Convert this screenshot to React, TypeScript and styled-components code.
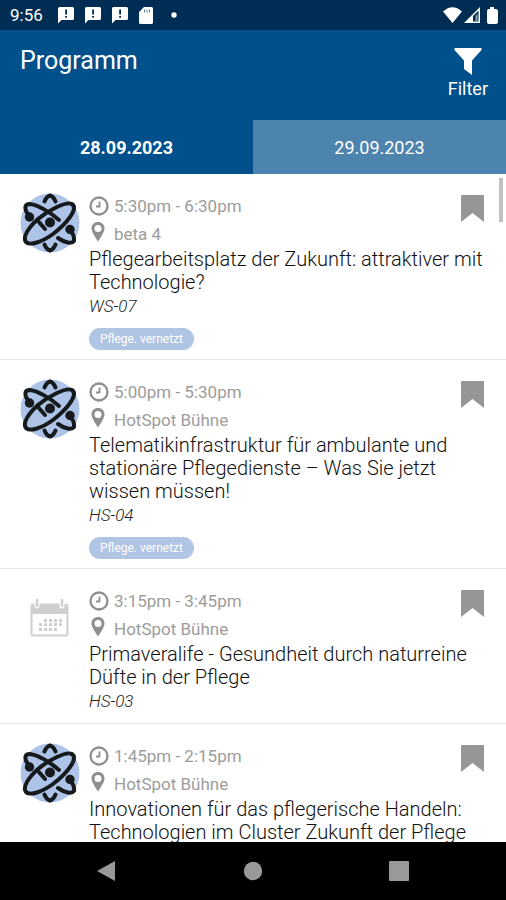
import React, { useState } from "react";
import styled, { createGlobalStyle } from "styled-components";

const GlobalStyle = createGlobalStyle`
  *, *::before, *::after { box-sizing: border-box; }
  body { margin: 0; background: #fff; font-family: Roboto, "Noto Sans", sans-serif; }
  button { font-family: inherit; }
  h1, h2, p, ul { margin: 0; padding: 0; }
`;

const Screen = styled.div`
  display: flex;
  flex-direction: column;
  height: 100vh;
`;

const StatusBar = styled.div`
  display: flex;
  flex: none;
  align-items: center;
  height: 30px;
  padding: 0 6px 0 10px;
  background: #002d54;
  color: #fff;
`;

const Clock = styled.time`
  width: 48px;
  font-size: 17px;
  line-height: 30px;
`;

const StatusIcons = styled.div`
  display: flex;
  flex: 1;
  align-items: center;
  gap: 11px;
`;

const SignalIcons = styled.div`
  display: flex;
  align-items: center;
  gap: 2px;
`;

const Header = styled.header`
  display: flex;
  flex: none;
  justify-content: space-between;
  align-items: flex-start;
  height: 90px;
  padding: 15px 18px 0 20px;
  background: #00508c;
  color: #fff;
`;

const PageTitle = styled.h1`
  font-size: 25px;
  font-weight: 400;
  line-height: 32px;
`;

const FilterButton = styled.button`
  display: flex;
  flex-direction: column;
  align-items: center;
  gap: 2px;
  padding: 2px 0 0;
  border: 0;
  background: none;
  color: inherit;
  font-size: 18px;
  line-height: 24px;
`;

const Tabs = styled.div`
  display: grid;
  flex: none;
  grid-template-columns: 1fr 1fr;
  height: 54px;
  background: #00508c;
`;

const Tab = styled.button<{ $active: boolean }>`
  padding: 1px 0 0;
  border: 0;
  background: ${(p) => (p.$active ? "#00508c" : "#4d84ae")};
  color: #fff;
  font-size: 18px;
  font-weight: ${(p) => (p.$active ? 700 : 400)};
`;

const ListArea = styled.main`
  position: relative;
  flex: 1;
  min-height: 0;
  overflow: hidden;
`;

const ScrollThumb = styled.div`
  position: absolute;
  top: 4px;
  right: 3px;
  width: 4px;
  height: 44px;
  background: #c2c2c2;
`;

const SessionList = styled.ul`
  list-style: none;
`;

const Session = styled.li`
  display: grid;
  grid-template-columns: 60px 1fr;
  column-gap: 9px;
  padding: 18px 20px 9px;
  border-bottom: 1px solid #e6e6e6;
`;

const Avatar = styled.div`
  display: flex;
  justify-content: center;
  padding-top: 1px;
`;

const Details = styled.div`
  min-width: 0;
`;

const TopLine = styled.div`
  display: flex;
  justify-content: space-between;
  align-items: flex-start;
`;

const Meta = styled.p`
  display: flex;
  align-items: center;
  height: 28px;
  color: #9c9c9c;
  font-size: 17px;
  font-weight: 400;
`;

const MetaIcon = styled.span`
  display: flex;
  width: 25px;
`;

const BookmarkButton = styled.button`
  display: flex;
  padding: 3px 1px 0 0;
  border: 0;
  background: none;
`;

const SessionTitle = styled.h2`
  color: #111;
  font-size: 20px;
  font-weight: 300;
  line-height: 23px;
`;

const Code = styled.p`
  color: #222;
  font-size: 17px;
  font-style: italic;
  font-weight: 300;
  line-height: 25px;
`;

const Tag = styled.span`
  display: block;
  width: fit-content;
  margin-top: 9px;
  padding: 0 11px;
  border-radius: 11px;
  background: #b0c4e4;
  color: #fff;
  font-size: 12px;
  line-height: 22px;
`;

const NavBar = styled.nav`
  display: flex;
  flex: none;
  justify-content: center;
  align-items: center;
  gap: 126px;
  height: 58px;
  background: #000;
`;

const NavButton = styled.button`
  display: flex;
  padding: 0;
  border: 0;
  background: none;
`;

const NoticeIcon = () => (
  <svg width="16" height="17" viewBox="0 0 16 17" aria-hidden="true">
    <path fill="#fff" d="M1.5 0h13A1.5 1.5 0 0 1 16 1.500v10a1.500 1.500 0 0 1-1.500 1.500H3.500L0 16.500V1.500A1.500 1.500 0 0 1 1.500 0Z" />
    <path fill="#002d54" d="M7.200 2.500h1.800v5H7.200zM7.200 9h1.800v1.800H7.200z" />
  </svg>
);

const CardIcon = () => (
  <svg width="14" height="17" viewBox="0 0 14 17" aria-hidden="true">
    <path fill="#fff" d="M5 0h7.500A1.500 1.500 0 0 1 14 1.500v14a1.500 1.500 0 0 1-1.500 1.500h-11A1.500 1.500 0 0 1 0 15.500V5Z" />
    <path stroke="#5d7a94" strokeWidth="1" d="M5.500 2.500v3M8 2.500v3M10.500 2.500v3" />
  </svg>
);

const DotIcon = () => (
  <svg width="18" height="6" viewBox="0 0 18 6" aria-hidden="true">
    <circle cx="10" cy="3" r="2.700" fill="#fff" />
  </svg>
);

const SignalSet = () => (
  <>
    <svg width="19" height="16" viewBox="0 0 19 16" aria-hidden="true">
      <path fill="#fff" d="M0 4.500Q9.500-4 19 4.500L9.500 16Z" />
    </svg>
    <svg width="17" height="16" viewBox="0 0 17 16" aria-hidden="true">
      <path fill="#fff" fillRule="evenodd" d="M0 16 16 0v16ZM9 9v5.500h5.500V3.500Z" />
      <path fill="#8ea5ba" d="M11.500 9 13.500 7v7h-2z" />
    </svg>
    <svg width="17" height="17" viewBox="0 0 17 17" aria-hidden="true">
      <path fill="#fff" d="M7 0h4v2h2q2 0 2 2v11q0 2-2 2H6q-2 0-2-2V4q0-2 2-2h1Z" />
    </svg>
  </>
);

const FunnelIcon = () => (
  <svg width="28" height="28" viewBox="0 0 28 28" aria-hidden="true">
    <path fill="#fff" d="M.5 1h27v2L18 13.500V28l-8-6v-8.500L.5 3Z" />
  </svg>
);

const AtomIcon = () => (
  <svg width="60" height="60" viewBox="0 0 60 60" aria-hidden="true">
    <circle cx="30" cy="30" r="29.500" fill="#adc3e7" />
    <g fill="none" stroke="#171a1d" strokeWidth="4" strokeLinecap="round" strokeLinejoin="round">
      <path d="M24.500 8.500q2-5 5.500-6 3.500 1 5.500 6M24.500 51.500q2 5 5.500 6 3.500-1 5.500-6" />
      <path d="M18 26C29 17 46 8 52 11 59 16 46 31 33 41 22 49 10 53 6 49 2 44 9 34 18 26Z" />
      <path d="M9 23C4 16 4 11 10 11c8 1 20 8 29 16M18 28l7 8M38 45c7 5 14 6 16 3q1-5-4-11" />
    </g>
    <g fill="#171a1d">
      <circle cx="30" cy="29.500" r="5" />
      <circle cx="9.500" cy="24" r="4.700" />
      <circle cx="50" cy="36.500" r="4.700" />
    </g>
  </svg>
);

const dots = [
  [18, 24], [23, 24], [28, 24], [33, 24],
  [13, 28], [18, 28], [23, 28], [28, 28], [33, 28],
  [13, 33], [18, 33], [23, 33], [28, 33],
];

const CalendarIcon = () => (
  <svg width="60" height="60" viewBox="-7 -8 60 60" aria-hidden="true">
    <rect x="4.500" y="8.500" width="36" height="31" rx="2.500" fill="#fff" stroke="#cfcfcf" strokeWidth="2" />
    <path fill="#cfcfcf" d="M4 8h37v10H4z" />
    <path stroke="#fff" strokeWidth="5" strokeLinecap="round" d="M10 5v5M35 5v5" />
    <path stroke="#cfcfcf" strokeWidth="2.500" strokeLinecap="round" d="M10 4v6M35 4v6" />
    {dots.map(([x, y]) => (
      <rect key={`${x}-${y}`} x={x - 1} y={y - 1} width="3" height="3" fill="#cfcfcf" />
    ))}
  </svg>
);

const ClockIcon = () => (
  <svg width="20" height="20" viewBox="0 0 20 20" fill="none" stroke="#8f8f8f" aria-hidden="true">
    <circle cx="10" cy="10" r="8.500" strokeWidth="2.300" />
    <path strokeWidth="1.800" d="M10.500 5.500v5H7" />
  </svg>
);

const PinIcon = () => (
  <svg width="18" height="24" viewBox="0 0 18 24" aria-hidden="true">
    <path
      fill="#8f8f8f"
      fillRule="evenodd"
      d="M9 0c3.800 0 6.500 2.700 6.500 6.300C15.500 10 12 15 9 19.500 6 15 2.500 10 2.500 6.300 2.500 2.700 5.200 0 9 0Zm0 3a3.500 3.500 0 1 0 0 7 3.500 3.500 0 0 0 0-7Z"
    />
  </svg>
);

const BookmarkIcon = () => (
  <svg width="25" height="27" viewBox="0 0 25 27" aria-hidden="true">
    <path fill="#969696" d="M2 0h21q1 0 1 1v26L12.500 18 1 27V1q0-1 1-1Z" />
  </svg>
);

type SessionData = {
  time: string;
  place: string;
  title: string;
  code: string;
  tag?: string;
  logo: "atom" | "calendar";
};

const sessions: SessionData[] = [
  {
    time: "5:30pm - 6:30pm",
    place: "beta 4",
    title: "Pflegearbeitsplatz der Zukunft: attraktiver mit Technologie?",
    code: "WS-07",
    tag: "Pflege. vernetzt",
    logo: "atom",
  },
  {
    time: "5:00pm - 5:30pm",
    place: "HotSpot Bühne",
    title: "Telematikinfrastruktur für ambulante und stationäre Pflegedienste – Was Sie jetzt wissen müssen!",
    code: "HS-04",
    tag: "Pflege. vernetzt",
    logo: "atom",
  },
  {
    time: "3:15pm - 3:45pm",
    place: "HotSpot Bühne",
    title: "Primaveralife - Gesundheit durch naturreine Düfte in der Pflege",
    code: "HS-03",
    logo: "calendar",
  },
  {
    time: "1:45pm - 2:15pm",
    place: "HotSpot Bühne",
    title: "Innovationen für das pflegerische Handeln: Technologien im Cluster Zukunft der Pflege",
    code: "",
    logo: "atom",
  },
];

const days = ["28.09.2023", "29.09.2023"];

export default function App() {
  const [day, setDay] = useState(days[0]);

  return (
    <Screen>
      <GlobalStyle />
      <StatusBar>
        <Clock>9:56</Clock>
        <StatusIcons>
          <NoticeIcon />
          <NoticeIcon />
          <NoticeIcon />
          <CardIcon />
          <DotIcon />
        </StatusIcons>
        <SignalIcons>
          <SignalSet />
        </SignalIcons>
      </StatusBar>
      <Header>
        <PageTitle>Programm</PageTitle>
        <FilterButton type="button">
          <FunnelIcon />
          Filter
        </FilterButton>
      </Header>
      <Tabs role="tablist">
        {days.map((d) => (
          <Tab key={d} type="button" role="tab" aria-selected={d === day} $active={d === day} onClick={() => setDay(d)}>
            {d}
          </Tab>
        ))}
      </Tabs>
      <ListArea>
        <SessionList>
          {sessions.map((s) => (
            <Session key={s.time}>
              <Avatar>{s.logo === "atom" ? <AtomIcon /> : <CalendarIcon />}</Avatar>
              <Details>
                <TopLine>
                  <div>
                    <Meta>
                      <MetaIcon><ClockIcon /></MetaIcon>
                      {s.time}
                    </Meta>
                    <Meta>
                      <MetaIcon><PinIcon /></MetaIcon>
                      {s.place}
                    </Meta>
                  </div>
                  <BookmarkButton type="button" aria-label="Merken">
                    <BookmarkIcon />
                  </BookmarkButton>
                </TopLine>
                <SessionTitle>{s.title}</SessionTitle>
                {s.code && <Code>{s.code}</Code>}
                {s.tag && <Tag>{s.tag}</Tag>}
              </Details>
            </Session>
          ))}
        </SessionList>
        <ScrollThumb />
      </ListArea>
      <NavBar>
        <NavButton type="button" aria-label="Zurück">
          <svg width="20" height="22" viewBox="0 0 20 22"><path fill="#999" d="M0 11 18 1v20Z" /></svg>
        </NavButton>
        <NavButton type="button" aria-label="Startseite">
          <svg width="20" height="20" viewBox="0 0 20 20"><circle cx="10" cy="10" r="9.200" fill="#999" /></svg>
        </NavButton>
        <NavButton type="button" aria-label="Übersicht">
          <svg width="20" height="20" viewBox="0 0 20 20"><rect width="20" height="20" rx="1" fill="#999" /></svg>
        </NavButton>
      </NavBar>
    </Screen>
  );
}
